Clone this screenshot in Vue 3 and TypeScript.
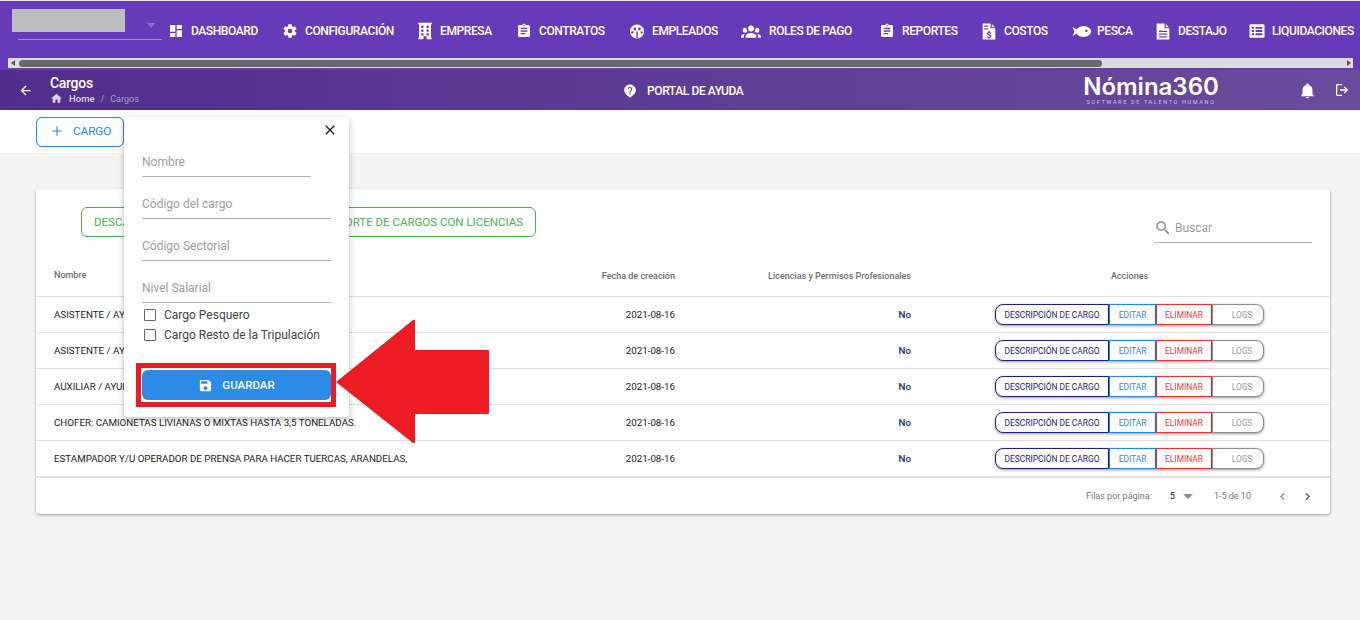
<template>
  <div class="page">
    <header class="top">
      <div class="nav-row">
        <div class="brand-select">
          <div class="brand-blur"></div>
          <span class="brand-caret"></span>
        </div>
        <nav class="menu">
          <a v-for="m in menu" :key="m.label" class="menu-item" :style="{ width: m.width + 'px' }">
            <span class="menu-slot" :style="{ width: m.slot + 'px' }">
              <svg :style="{ width: m.size + 'px', height: m.size + 'px', marginRight: m.slot / 2 + 'px' }" viewBox="0 0 24 24">
                <path :d="m.icon" fill="#fff" fill-rule="evenodd" />
              </svg>
            </span>
            <span>{{ m.label }}</span>
          </a>
        </nav>
      </div>
      <div class="scrollbar">
        <span class="scroll-arrow left"></span>
        <div class="scroll-thumb"></div>
        <span class="scroll-arrow right"></span>
      </div>
    </header>

    <div class="subbar">
      <svg class="back" viewBox="0 0 24 24"><path d="M20,11V13H8L13.5,18.5L12.08,19.92L4.16,12L12.08,4.08L13.5,5.5L8,11H20Z" fill="#fff" /></svg>
      <div class="crumbs">
        <div class="crumb-title">Cargos</div>
        <div class="crumb-line">
          <svg class="home" viewBox="0 0 24 24"><path d="M10,20V14H14V20H19V12H22L12,3L2,12H5V20H10Z" fill="#d9d2e6" /></svg>
          <b>Home</b><i>/</i><span>Cargos</span>
        </div>
      </div>
      <div class="help">
        <svg class="help-icon" viewBox="0 0 24 24"><path d="M12,1C6.5,1 2,5.3 2,10.5C2,16.5 8.5,20 12,23.5C15.5,20 22,16.5 22,10.5C22,5.3 17.5,1 12,1M11,16H13V18H11V16M12,5A4,4 0 0,1 16,9C16,11.5 13,11.75 13,14.5H11C11,11.25 14,11 14,9A2,2 0 0,0 12,7A2,2 0 0,0 10,9H8A4,4 0 0,1 12,5Z" fill="#fff" fill-rule="evenodd" /></svg>
        PORTAL DE AYUDA
      </div>
      <div class="logo">
        <div class="logo-name">Nómina360</div>
        <div class="logo-sub">SOFTWARE DE TALENTO HUMANO</div>
      </div>
      <svg class="bell" viewBox="0 0 24 24"><path d="M21,19V20H3V19L5,17V11C5,7.9 7.03,5.17 10,4.29C10,4.19 10,4.1 10,4A2,2 0 0,1 12,2A2,2 0 0,1 14,4C14,4.1 14,4.19 14,4.29C16.97,5.17 19,7.9 19,11V17L21,19M14,21A2,2 0 0,1 12,23A2,2 0 0,1 10,21" fill="#fff" /></svg>
      <svg class="logout" viewBox="0 0 24 24"><path d="M14.6,15.9L17.5,13H9V11H17.5L14.6,8.1L16,6.7L21.3,12L16,17.3L14.6,15.9M12,3V5H5V19H12V21H5C3.9,21 3,20.1 3,19V5C3,3.9 3.9,3 5,3H12Z" fill="#fff" /></svg>
    </div>

    <div class="toolbar">
      <button class="add-btn">
        <svg viewBox="0 0 24 24"><path d="M19,12.8H12.8V19H11.2V12.8H5V11.2H11.2V5H12.8V11.2H19V12.8Z" fill="#1e88e5" /></svg>
        CARGO
      </button>
    </div>

    <main class="content">
      <section class="card">
        <div class="card-top">
          <button class="report-btn"><span>DESCARGAR</span><span>REPORTE DE CARGOS CON LICENCIAS</span></button>
          <div class="search">
            <svg viewBox="0 0 24 24"><path d="M9.5,3A6.5,6.5 0 0,1 16,9.5C16,11.11 15.41,12.59 14.44,13.73L14.71,14H15.5L20.5,19L19,20.5L14,15.5V14.71L13.73,14.44C12.59,15.41 11.11,16 9.5,16A6.5,6.5 0 0,1 3,9.5A6.5,6.5 0 0,1 9.5,3M9.5,5C7,5 5,7 5,9.5C5,12 7,14 9.5,14C12,14 14,12 14,9.5C14,7 12,5 9.5,5Z" fill="#8c8c8c" /></svg>
            <span>Buscar</span>
          </div>
        </div>

        <table class="grid">
          <thead>
            <tr>
              <th class="c-name">Nombre</th>
              <th class="c-date">Fecha de creación</th>
              <th class="c-lic">Licencias y Permisos Profesionales</th>
              <th class="c-act">Acciones</th>
            </tr>
          </thead>
          <tbody>
            <tr v-for="r in rows" :key="r">
              <td class="c-name">{{ r }}</td>
              <td class="c-date">2021-08-16</td>
              <td class="c-lic">No</td>
              <td class="c-act">
                <div class="actions">
                  <button class="a a-desc">DESCRIPCIÓN DE CARGO</button>
                  <button class="a a-edit">EDITAR</button>
                  <button class="a a-del">ELIMINAR</button>
                  <button class="a a-logs">LOGS</button>
                </div>
              </td>
            </tr>
          </tbody>
        </table>

        <footer class="pager">
          <span class="pager-label">Filas por página:</span>
          <span class="pager-num">5</span>
          <span class="pager-caret"></span>
          <span class="pager-range">1-5 de 10</span>
          <svg class="chev prev" viewBox="0 0 24 24"><path d="M15.41,16.58L10.83,12L15.41,7.41L14,6L8,12L14,18L15.41,16.58Z" fill="#8c8c8c" /></svg>
          <svg class="chev" viewBox="0 0 24 24"><path d="M8.59,16.58L13.17,12L8.59,7.41L10,6L16,12L10,18L8.59,16.58Z" fill="#555" /></svg>
        </footer>
      </section>
    </main>

    <!-- menu abierto sobre la tabla -->
    <div class="popup">
      <svg class="close" viewBox="0 0 24 24"><path d="M19,6.41L17.59,5L12,10.59L6.41,5L5,6.41L10.59,12L5,17.59L6.41,19L12,13.41L17.59,19L19,17.59L13.41,12L19,6.41Z" fill="#222" /></svg>
      <div class="field short">Nombre</div>
      <div class="field">Código del cargo</div>
      <div class="field">Código Sectorial</div>
      <div class="field">Nivel Salarial</div>
      <label class="check"><span class="box"></span>Cargo Pesquero</label>
      <label class="check"><span class="box"></span>Cargo Resto de la Tripulación</label>
      <div class="save-frame">
        <button class="save-btn">
          <svg viewBox="0 0 24 24"><path d="M15,9H5V5H15M12,19A3,3 0 0,1 9,16A3,3 0 0,1 12,13A3,3 0 0,1 15,16A3,3 0 0,1 12,19M17,3H5C3.89,3 3,3.9 3,5V19A2,2 0 0,0 5,21H19A2,2 0 0,0 21,19V7L17,3Z" fill="#fff" /></svg>
          GUARDAR
        </button>
      </div>
    </div>

    <svg class="red-arrow" viewBox="0 0 156 126"><path d="M1,63 L78,1 Q80,0 80,2 V31 H153 Q154,31 154,32 V94 Q154,95 153,95 H80 V123 Q80,125 78,124 Z" fill="#ed1c24" /></svg>
  </div>
</template>

<script setup lang="ts">
interface MenuItem {
  label: string
  icon: string
  size: number
  slot: number
  width: number
}

const clipboard = 'M17,9H7V7H17M17,13H7V11H17M14,17H7V15H14M12,3A1,1 0 0,1 13,4A1,1 0 0,1 12,5A1,1 0 0,1 11,4A1,1 0 0,1 12,3M19,3H14.82C14.4,1.84 13.3,1 12,1C10.7,1 9.6,1.84 9.18,3H5A2,2 0 0,0 3,5V19A2,2 0 0,0 5,21H19A2,2 0 0,0 21,19V5A2,2 0 0,0 19,3Z'

const menu: MenuItem[] = [
  { label: 'DASHBOARD', size: 16, slot: 30, width: 114, icon: 'M13,3V9H21V3M13,21H21V11H13M3,21H11V15H3M3,13H11V3H3V13Z' },
  { label: 'CONFIGURACIÓN', size: 16, slot: 30, width: 135, icon: 'M12,15.5A3.5,3.5 0 0,1 8.5,12A3.5,3.5 0 0,1 12,8.5A3.5,3.5 0 0,1 15.5,12A3.5,3.5 0 0,1 12,15.5M19.43,12.97C19.47,12.65 19.5,12.33 19.5,12C19.5,11.67 19.47,11.34 19.43,11L21.54,9.37C21.73,9.22 21.78,8.95 21.66,8.73L19.66,5.27C19.54,5.05 19.27,4.96 19.05,5.05L16.56,6.05C16.04,5.66 15.5,5.32 14.87,5.07L14.5,2.42C14.46,2.18 14.25,2 14,2H10C9.75,2 9.54,2.18 9.5,2.42L9.13,5.07C8.5,5.32 7.96,5.66 7.44,6.05L4.95,5.05C4.73,4.96 4.46,5.05 4.34,5.27L2.34,8.73C2.21,8.95 2.27,9.22 2.46,9.37L4.57,11C4.53,11.34 4.5,11.67 4.5,12C4.5,12.33 4.53,12.65 4.57,12.97L2.46,14.63C2.27,14.78 2.21,15.05 2.34,15.27L4.34,18.73C4.46,18.95 4.73,19.03 4.95,18.95L7.44,17.94C7.96,18.34 8.5,18.68 9.13,18.93L9.5,21.58C9.54,21.82 9.75,22 10,22H14C14.25,22 14.46,21.82 14.5,21.58L14.87,18.93C15.5,18.67 16.04,18.34 16.56,17.94L19.05,18.95C19.27,19.03 19.54,18.95 19.66,18.73L21.66,15.27C21.78,15.05 21.73,14.78 21.54,14.63L19.43,12.97Z' },
  { label: 'EMPRESA', size: 18, slot: 30, width: 99, icon: 'M3,1H21V3H20V21H21V23H14V19H10V23H3V21H4V3H3V1M7,5V8H10V5H7M14,5V8H17V5H14M7,10V13H10V10H7M14,10V13H17V10H14M7,15V18H10V15H7M14,15V18H17V15H14Z' },
  { label: 'CONTRATOS', size: 16, slot: 30, width: 113, icon: clipboard },
  { label: 'EMPLEADOS', size: 17, slot: 30, width: 111, icon: 'M12,2A10,10 0 1,0 22,12A10,10 0 0,0 12,2M9,6.5A2,2 0 1,1 9,10.5A2,2 0 1,1 9,6.5M15.5,6.5A2,2 0 1,1 15.5,10.5A2,2 0 1,1 15.5,6.5M5.5,11.5A1.7,1.7 0 1,1 5.5,14.9A1.7,1.7 0 1,1 5.5,11.5M18.5,11.5A1.7,1.7 0 1,1 18.5,14.9A1.7,1.7 0 1,1 18.5,11.5M11,12H13V21H11Z' },
  { label: 'ROLES DE PAGO', size: 20, slot: 36, width: 139, icon: 'M12,5.5A3.5,3.5 0 0,1 15.5,9A3.5,3.5 0 0,1 12,12.5A3.5,3.5 0 0,1 8.5,9A3.5,3.5 0 0,1 12,5.5M5,8C5.56,8 6.08,8.15 6.53,8.42C6.38,9.85 6.8,11.27 7.66,12.38C7.16,13.34 6.16,14 5,14A3,3 0 0,1 2,11A3,3 0 0,1 5,8M19,8A3,3 0 0,1 22,11A3,3 0 0,1 19,14C17.84,14 16.84,13.34 16.34,12.38C17.2,11.27 17.62,9.85 17.47,8.42C17.92,8.15 18.44,8 19,8M5.5,18.25C5.5,16.18 8.41,14.5 12,14.5C15.59,14.5 18.5,16.18 18.5,18.25V20H5.5V18.25M0,20V18.5C0,17.11 1.89,15.94 4.45,15.6C3.86,16.28 3.5,17.22 3.5,18.25V20H0M24,20H20.5V18.25C20.5,17.22 20.14,16.28 19.55,15.6C22.11,15.94 24,17.11 24,18.5V20Z' },
  { label: 'REPORTES', size: 16, slot: 30, width: 102, icon: clipboard },
  { label: 'COSTOS', size: 19, slot: 30, width: 93, icon: 'M4,2H14V8H20V22H4V2M15.5,2.5L19.5,6.5H15.5V2.5M6,4.5V6H11V4.5H6M6,8V9.5H11V8H6M11.3,11V12.3C10,12.6 9.1,13.4 9.1,14.6C9.1,16 10.3,16.6 11.9,17C13.2,17.3 13.5,17.7 13.5,18.1C13.5,18.5 13.1,18.9 12.2,18.9C11.3,18.9 10.9,18.5 10.8,17.9H9.2C9.3,19.2 10.3,19.9 11.3,20.1V21.2H12.9V20.1C14.2,19.9 15.1,19.1 15.1,18.1C15.1,16.6 13.9,16 12.4,15.6C11.1,15.3 10.8,15 10.8,14.6C10.8,14.1 11.2,13.7 12.1,13.7C13,13.7 13.4,14.2 13.4,14.7H15C14.9,13.5 14.1,12.6 12.9,12.3V11H11.3Z' },
  { label: 'PESCA', size: 19, slot: 30, width: 81, icon: 'M0,6L5,9.5C7,6.5 10.5,5 14,5C19,5 23,8.5 24,12C23,15.5 19,19 14,19C10.5,19 7,17.5 5,14.5L0,18L2.5,12L0,6M17.5,9.5A1.5,1.5 0 1,0 17.5,12.5A1.5,1.5 0 1,0 17.5,9.5Z' },
  { label: 'DESTAJO', size: 19, slot: 30, width: 94, icon: 'M4,2H14V8H20V22H4V2M15.5,2.5L19.5,6.5H15.5V2.5M7,11V12.5H17V11H7M7,14.5V16H17V14.5H7M7,18V19.5H17V18H7Z' },
  { label: 'LIQUIDACIONES', size: 18, slot: 30, width: 118, icon: 'M3,3H21A1,1 0 0,1 22,4V20A1,1 0 0,1 21,21H3A1,1 0 0,1 2,20V4A1,1 0 0,1 3,3M5,6.5V9H8V6.5H5M10,6.5V9H19V6.5H10M5,10.8V13.2H8V10.8H5M10,10.8V13.2H19V10.8H10M5,15V17.5H8V15H5M10,15V17.5H19V15H10Z' },
]

const rows: string[] = [
  'ASISTENTE / AYUDANTE DE ALMACENAMIENTO',
  'ASISTENTE / AYUDANTE DE BODEGA',
  'AUXILIAR / AYUDANTE DE CARGA',
  'CHOFER: CAMIONETAS LIVIANAS O MIXTAS HASTA 3,5 TONELADAS.',
  'ESTAMPADOR Y/U OPERADOR DE PRENSA PARA HACER TUERCAS, ARANDELAS,',
]
</script>

<style>
html,
body {
  margin: 0;
  background: #f4f4f4;
}
</style>

<style scoped>
.page {
  position: relative;
  width: 1360px;
  height: 620px;
  overflow: hidden;
  background: #f4f4f4;
  font-family: Roboto, "Liberation Sans", sans-serif;
}

.top {
  height: 69px;
  margin-top: 1px;
  padding-top: 1px;
  box-sizing: border-box;
  background: #673ab7;
  box-shadow: 0 -1px 0 #e8e4ee;
}
.nav-row {
  display: flex;
  height: 56px;
}
.brand-select {
  position: relative;
  flex: none;
  width: 144px;
  height: 30px;
  margin: 7px 0 0 18px;
  border-bottom: 1px solid #a18bcf;
}
.brand-blur {
  position: absolute;
  left: -6px;
  top: 0;
  width: 113px;
  height: 23px;
  background: #bdbdbd;
}
.brand-caret {
  position: absolute;
  right: 7px;
  top: 14px;
  border-left: 4px solid transparent;
  border-right: 4px solid transparent;
  border-top: 5px solid #8a6fc4;
}
.menu {
  display: flex;
  align-items: center;
  height: 58px;
  margin-left: -1px;
  white-space: nowrap;
}
.menu-item {
  display: flex;
  flex: none;
  align-items: center;
  color: #fff;
  font-size: 12px;
  font-weight: 500;
  letter-spacing: -0.4px;
}
.menu-slot {
  display: flex;
  flex: none;
  justify-content: flex-end;
}
.menu-slot svg {
  flex: none;
  transform: translateX(50%);
}

.scrollbar {
  display: flex;
  align-items: center;
  height: 10px;
  margin: 0 7px 0 8px;
  background: #dcdcdc;
}
.scroll-thumb {
  width: 1083px;
  height: 7px;
  margin-left: 4px;
  border-radius: 4px;
  background: #686868;
}
.scroll-arrow {
  border-top: 3px solid transparent;
  border-bottom: 3px solid transparent;
}
.scroll-arrow.left {
  margin-left: 3px;
  border-right: 4px solid #555;
}
.scroll-arrow.right {
  margin-left: auto;
  margin-right: 2px;
  border-left: 4px solid #555;
}

.subbar {
  display: flex;
  align-items: center;
  height: 40px;
  background: linear-gradient(90deg, #512d8c, #6a4b9d);
  color: #fff;
}
.back {
  width: 15px;
  height: 15px;
  margin-left: 18px;
}
.crumbs {
  margin-left: 17px;
  width: 200px;
}
.crumb-title {
  font-size: 14px;
  font-weight: 500;
  line-height: 16px;
  letter-spacing: -0.3px;
}
.crumb-line {
  display: flex;
  align-items: center;
  height: 14px;
  margin-top: 1px;
  font-size: 9px;
  color: #a99bc4;
}
.crumb-line b {
  margin-left: 6px;
  color: #d9d2e6;
  font-size: 9.5px;
  font-weight: 500;
}
.crumb-line i {
  margin: 0 6px;
  font-style: normal;
}
.home {
  width: 13px;
  height: 13px;
}
.help {
  display: flex;
  align-items: center;
  margin-left: 373px;
  width: 447px;
  padding-top: 1px;
  font-size: 12px;
  font-weight: 500;
  letter-spacing: -0.4px;
}
.help-icon {
  width: 14px;
  height: 14px;
  margin-right: 10px;
}
.logo {
  width: 138px;
  text-align: center;
  margin-left: 12px;
}
.logo-name {
  font-family: Inter, sans-serif;
  font-size: 24px;
  font-weight: 600;
  line-height: 23px;
}
.logo-sub {
  font-size: 5.5px;
  letter-spacing: 1.65px;
  line-height: 8px;
  color: #cbbfe0;
}
.bell {
  width: 17px;
  height: 17px;
  margin-left: 79px;
}
.logout {
  width: 16px;
  height: 16px;
  margin-left: 18px;
}

.toolbar {
  height: 43px;
  padding: 7px 0 0 36px;
  box-sizing: border-box;
  background: #fff;
}
.add-btn {
  display: flex;
  align-items: center;
  width: 88px;
  height: 30px;
  padding: 0 0 2px 12px;
  box-sizing: border-box;
  background: #fff;
  border: 1px solid #1e88e5;
  border-radius: 6px;
  color: #1e88e5;
  font: 400 11.8px Roboto, sans-serif;
  letter-spacing: -0.1px;
}
.add-btn svg {
  width: 16px;
  height: 16px;
  margin-right: 8px;
}

.content {
  padding: 36px 30px 0 36px;
}
.card {
  height: 325px;
  background: #fff;
  border-radius: 3px;
  box-shadow: 0 1px 3px rgba(0, 0, 0, 0.35);
}
.card-top {
  display: flex;
  justify-content: space-between;
  height: 68px;
  padding: 18px 18px 0 45px;
  box-sizing: border-box;
}
.report-btn {
  display: flex;
  align-items: center;
  justify-content: space-between;
  width: 455px;
  height: 30px;
  padding: 0 12px;
  background: #fff;
  border: 1px solid #4caf50;
  border-radius: 6px;
  color: #4caf50;
  font: 400 11.5px Roboto, sans-serif;
}
.search {
  display: flex;
  align-items: center;
  width: 158px;
  height: 36px;
  padding-top: 6px;
  box-sizing: border-box;
  border-bottom: 1px solid #b4b4b4;
  font-size: 12px;
  color: #9e9e9e;
}
.search svg {
  width: 18px;
  height: 18px;
  margin-right: 3px;
}

.grid {
  width: 1294px;
  border-collapse: collapse;
  table-layout: fixed;
}
.grid th {
  height: 39px;
  padding: 0 18px;
  box-sizing: border-box;
  font-size: 9px;
  font-weight: 500;
  color: #6e6e6e;
  border-bottom: 1px solid #e0e0e0;
}
.grid th.c-name {
  padding-bottom: 2px;
}
.grid td {
  height: 35px;
  padding: 0 18px;
  font-size: 9.75px;
  color: #222;
  border-bottom: 1px solid #e0e0e0;
}
.c-name {
  width: 484px;
  text-align: left;
}
.c-date {
  width: 173px;
  text-align: right;
}
.c-lic {
  width: 236px;
  text-align: right;
}
.grid td.c-lic {
  font-weight: 500;
  color: #1b2a6b;
}
.c-act {
  text-align: center;
}
.actions {
  display: flex;
  justify-content: center;
}
.a {
  height: 21px;
  padding: 1px 0 0;
  background: #fff;
  font: 400 8.4px Roboto, sans-serif;
  box-shadow: 0 1px 3px rgba(0, 0, 0, 0.4);
}
.a-desc {
  width: 114px;
  border: 1px solid #1a237e;
  border-radius: 8px 0 0 8px;
  color: #1a237e;
}
.a-edit {
  width: 47px;
  border: 1px solid #1e88e5;
  color: #1e88e5;
}
.a-del {
  width: 56px;
  border: 1px solid #e53935;
  color: #e53935;
}
.a-logs {
  width: 52px;
  padding-left: 8px;
  border: 1px solid #8f8791;
  border-radius: 0 8px 8px 0;
  color: #9e9e9e;
}

.pager {
  display: flex;
  align-items: center;
  height: 37px;
  border-top: 1px solid #e0e0e0;
  font-size: 9px;
  color: #777;
}
.pager-label {
  margin-left: 1050px;
}
.pager-num {
  margin-left: 18px;
  color: #111;
}
.pager-caret {
  margin-left: 8px;
  border-left: 5px solid transparent;
  border-right: 5px solid transparent;
  border-top: 5px solid #8c8c8c;
}
.pager-range {
  margin-left: 21px;
}
.chev {
  width: 15px;
  height: 15px;
  margin-left: 10px;
}
.chev.prev {
  margin-left: 24px;
}

.popup {
  position: absolute;
  left: 124px;
  top: 117px;
  width: 225px;
  height: 300px;
  padding: 28px 18px 0;
  box-sizing: border-box;
  background: #fff;
  border-radius: 3px;
  box-shadow: 0 2px 6px rgba(0, 0, 0, 0.28);
}
.close {
  position: absolute;
  right: 11px;
  top: 5px;
  width: 16px;
  height: 16px;
}
.field {
  height: 32px;
  margin-bottom: 10px;
  padding-top: 10px;
  box-sizing: border-box;
  border-bottom: 1px solid #b4b4b4;
  font-size: 12px;
  color: #9e9e9e;
}
.field.short {
  width: 169px;
}
.check {
  display: flex;
  align-items: center;
  height: 20px;
  font-size: 12px;
  color: #444;
}
.field + .check {
  margin-top: -8px;
}
.box {
  width: 10px;
  height: 10px;
  margin: 0 7px 0 3px;
  border: 1px solid #666;
  border-radius: 1px;
  transform: translateX(-1px);
}
.save-frame {
  position: absolute;
  left: 12px;
  top: 246px;
  width: 200px;
  height: 44px;
  padding: 7px 0 0 6px;
  box-sizing: border-box;
  box-shadow: inset 0 0 0 5px #ed1c24;
}
.save-btn {
  display: flex;
  align-items: center;
  justify-content: center;
  width: 189px;
  height: 30px;
  padding: 0;
  background: #2a8ce6;
  border: 0;
  border-radius: 6px;
  color: #fff;
  font: 500 11.5px Roboto, sans-serif;
}
.save-btn svg {
  width: 15px;
  height: 15px;
  margin-right: 9px;
}

.red-arrow {
  position: absolute;
  left: 335px;
  top: 319px;
  width: 156px;
  height: 126px;
}
</style>
